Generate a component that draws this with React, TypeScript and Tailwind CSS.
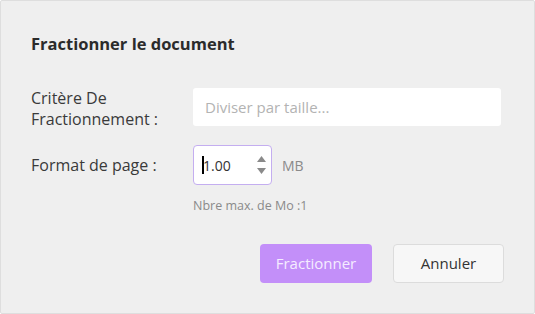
export default function App() {
  return (
    <div className="w-[535px] h-[314px] bg-[#efefef] border border-[#dedede] rounded-[2px] font-['Open_Sans','Noto_Sans',sans-serif] text-[#333] box-border">
      <div className="pl-[30px] pr-[30px] pt-[32px]">
        <h1 className="text-[16.5px] leading-[22px] font-bold text-[#2b2b2b]">
          Fractionner le document
        </h1>

        <div className="mt-[33px] flex items-start">
          <label className="w-[162px] text-[16px] leading-[21px] text-[#3a3a3a]">
            Critère De
            <br />
            Fractionnement :
          </label>
          <div className="w-[308px] h-[38px] bg-white rounded-[3px] flex items-center px-[12px] text-[15px] text-[#b3b3b3]">
            Diviser par taille...
          </div>
        </div>

        <div className="mt-[15px] flex items-center">
          <label className="w-[162px] text-[16px] text-[#3a3a3a]">
            Format de page :
          </label>
          <div className="w-[79px] h-[40px] bg-white border border-[#c4aef0] rounded-[4px] flex items-center pl-[8px] pr-[5px]">
            <span className="w-[2px] h-[18px] bg-black" />
            <span className="text-[14px] text-[#333] -ml-[1px]">1.00</span>
            <div className="ml-auto flex flex-col items-center gap-[6px]">
              <svg width="9" height="6" viewBox="0 0 9 6">
                <path d="M4.5 0 L9 6 L0 6 Z" fill="#8a8a8a" />
              </svg>
              <svg width="9" height="6" viewBox="0 0 9 6">
                <path d="M0 0 L9 0 L4.5 6 Z" fill="#8a8a8a" />
              </svg>
            </div>
          </div>
          <span className="ml-[10px] text-[14px] text-[#8a8a8a]">MB</span>
        </div>

        <div className="mt-[13px] ml-[162px] text-[12.5px] leading-[16px] text-[#8a8a8a]">
          Nbre max. de Mo :1
        </div>

        <div className="mt-[30px] flex justify-end gap-[21px]">
          <button className="w-[112px] h-[39px] rounded-[4px] bg-[#c38ff9] text-[15px] text-[#f5ecff]">
            Fractionner
          </button>
          <button className="w-[111px] h-[39px] rounded-[4px] bg-[#f7f7f7] border border-[#dcdcdc] text-[15px] text-[#333]">
            Annuler
          </button>
        </div>
      </div>
    </div>
  );
}
